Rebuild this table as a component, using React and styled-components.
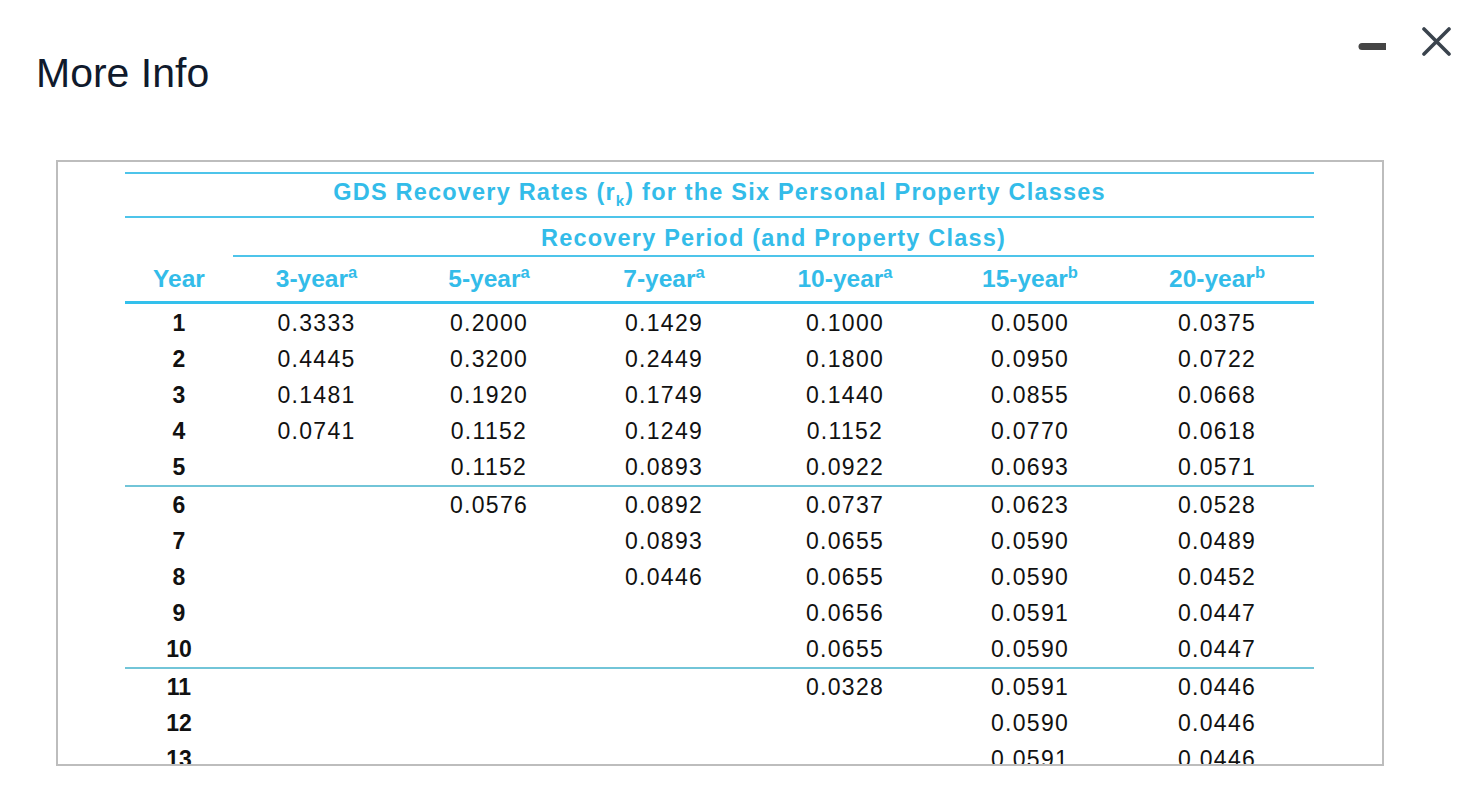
import React from "react";
import styled, { createGlobalStyle } from "styled-components";

const GlobalStyle = createGlobalStyle`
  body {
    margin: 0;
    background: #fff;
    font-family: "Liberation Sans", Arial, Helvetica, sans-serif;
  }
`;

const CYAN = "#33bce9";

const Page = styled.div`
  width: 1466px;
  height: 804px;
  position: relative;
  overflow: hidden;
`;

const Title = styled.h1`
  margin: 0;
  padding: 53px 0 0 36px;
  font-size: 41px;
  line-height: 1;
  font-weight: 400;
  color: #101a2c;
`;

const Controls = styled.div`
  position: absolute;
  top: 27px;
  right: 15px;
  display: flex;
  align-items: center;
  gap: 35px;
`;

const IconButton = styled.button`
  border: none;
  background: none;
  padding: 0;
  display: flex;
  cursor: pointer;
`;

const Frame = styled.div`
  box-sizing: border-box;
  margin: 66px 0 0 56px;
  width: 1328px;
  height: 606px;
  border: 2px solid #bdbdbd;
  overflow: hidden;
  padding: 10px 68px 0 67px;
`;

const Table = styled.table`
  width: 1189px;
  border-collapse: collapse;
  table-layout: fixed;
  border-top: 2px solid #4ec4ea;
`;

const Caption = styled.td`
  height: ${(p) => p.$h}px;
  padding: ${(p) => (p.$low ? "3px 0 0" : "0 0 2px")};
  text-align: center;
  color: ${CYAN};
  font-weight: 700;
  font-size: 23.5px;
  letter-spacing: 1.2px;
  border-bottom: 2px solid ${(p) => (p.$line ? "#4ec4ea" : "transparent")};
`;

const HeadCell = styled.th`
  height: 43px;
  padding: 0 0 1px;
  text-align: center;
  color: ${CYAN};
  font-weight: 700;
  font-size: 24.5px;
  border-bottom: 3px solid #33c0ec;
  sup {
    font-size: 16.5px;
    vertical-align: 9px;
    line-height: 0;
  }
`;

const Row = styled.tr`
  border-top: ${(p) => (p.$sep ? "2px solid #72c5d8" : "none")};
`;

const Cell = styled.td`
  height: 36px;
  padding: ${(p) => (p.$first ? "1px 0 0" : "0")};
  text-align: center;
  font-size: 23px;
  letter-spacing: ${(p) => (p.$year ? "0" : "1.3px")};
  font-weight: ${(p) => (p.$year ? 700 : 400)};
  color: #111;
`;

const widths = [108, 167, 178, 172, 190, 180, 194];

const classes = [
  ["3-year", "a"],
  ["5-year", "a"],
  ["7-year", "a"],
  ["10-year", "a"],
  ["15-year", "b"],
  ["20-year", "b"],
];

const data = [
  ["0.3333", "0.2000", "0.1429", "0.1000", "0.0500", "0.0375"],
  ["0.4445", "0.3200", "0.2449", "0.1800", "0.0950", "0.0722"],
  ["0.1481", "0.1920", "0.1749", "0.1440", "0.0855", "0.0668"],
  ["0.0741", "0.1152", "0.1249", "0.1152", "0.0770", "0.0618"],
  ["", "0.1152", "0.0893", "0.0922", "0.0693", "0.0571"],
  ["", "0.0576", "0.0892", "0.0737", "0.0623", "0.0528"],
  ["", "", "0.0893", "0.0655", "0.0590", "0.0489"],
  ["", "", "0.0446", "0.0655", "0.0590", "0.0452"],
  ["", "", "", "0.0656", "0.0591", "0.0447"],
  ["", "", "", "0.0655", "0.0590", "0.0447"],
  ["", "", "", "0.0328", "0.0591", "0.0446"],
  ["", "", "", "", "0.0590", "0.0446"],
  ["", "", "", "", "0.0591", "0.0446"],
  ["", "", "", "", "0.0590", "0.0446"],
];

function App() {
  return (
    <Page>
      <GlobalStyle />
      <Title>More Info</Title>
      <Controls>
        <IconButton aria-label="minimize">
          <svg width="28" height="28" viewBox="0 0 28 28">
            <line x1="4" y1="18.5" x2="27" y2="18.5" stroke="#454545" strokeWidth="7" strokeLinecap="round" />
          </svg>
        </IconButton>
        <IconButton aria-label="close">
          <svg width="30" height="30" viewBox="0 0 30 30">
            <path d="M3 2 L28 27 M28 2 L3 27" stroke="#3a434d" strokeWidth="3.6" strokeLinecap="round" fill="none" />
          </svg>
        </IconButton>
      </Controls>
      <Frame>
        <Table>
          <colgroup>
            {widths.map((w, i) => (
              <col key={i} style={{ width: w }} />
            ))}
          </colgroup>
          <tbody>
            <tr>
              <Caption colSpan={7} $h={40} $line>
                GDS Recovery Rates (r<sub style={{ fontSize: 15 }}>k</sub>) for the Six Personal Property Classes
              </Caption>
            </tr>
            <tr>
              <Caption $h={34} $low />
              <Caption colSpan={6} $h={34} $low $line>
                Recovery Period (and Property Class)
              </Caption>
            </tr>
            <tr>
              <HeadCell>Year</HeadCell>
              {classes.map(([label, note]) => (
                <HeadCell key={label}>
                  {label}
                  <sup>{note}</sup>
                </HeadCell>
              ))}
            </tr>
            {data.map((row, i) => (
              <Row key={i} $sep={i === 5 || i === 10}>
                <Cell $year $first={i === 0}>{i + 1}</Cell>
                {row.map((v, j) => (
                  <Cell key={j} $first={i === 0}>{v}</Cell>
                ))}
              </Row>
            ))}
          </tbody>
        </Table>
      </Frame>
    </Page>
  );
}

export default App;
